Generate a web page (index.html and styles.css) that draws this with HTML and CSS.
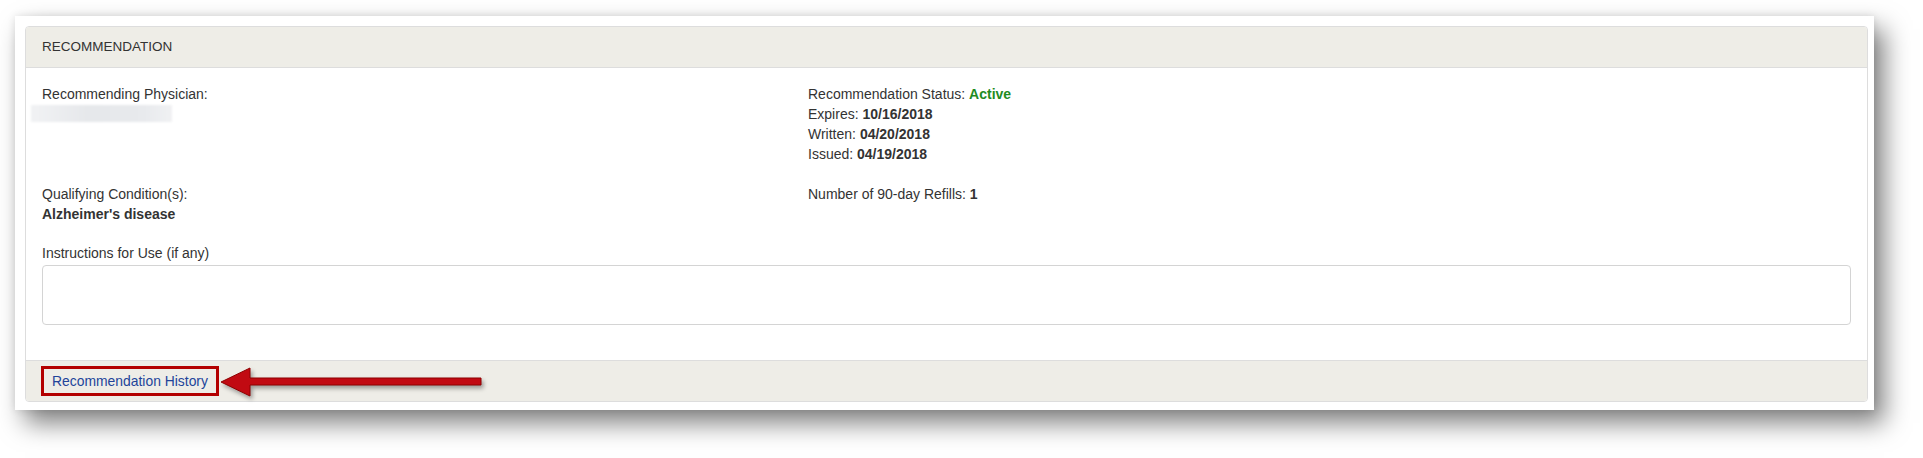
FILE: index.html
```html
<!DOCTYPE html>
<html>
<head>
<meta charset="utf-8">
<link rel="stylesheet" href="styles.css">
</head>
<body>
<div class="frame">
  <div class="panel">
    <div class="panel-heading">RECOMMENDATION</div>
    <div class="panel-body">
      <div class="grid">
        <div class="cell">
          <div>Recommending Physician:</div>
          <div class="redacted"></div>
        </div>
        <div class="cell">
          <div>Recommendation Status: <b class="active">Active</b></div>
          <div>Expires: <b>10/16/2018</b></div>
          <div>Written: <b>04/20/2018</b></div>
          <div>Issued: <b>04/19/2018</b></div>
        </div>
        <div class="cell">
          <div>Qualifying Condition(s):</div>
          <div><b>Alzheimer's disease</b></div>
        </div>
        <div class="cell">
          <div>Number of 90-day Refills: <b>1</b></div>
        </div>
      </div>
      <div class="instructions-label">Instructions for Use (if any)</div>
      <div class="textarea"></div>
    </div>
    <div class="panel-footer">
      <a class="history-link" href="#">Recommendation History</a>
      <svg class="arrow" width="270" height="36" viewBox="0 0 270 36">
        <polygon points="0,16 29,2 29,12 260,12 260,19 29,19 29,30" fill="#c10a12" stroke="#8e0000" stroke-width="1"/>
      </svg>
    </div>
  </div>
</div>
</body>
</html>
```
FILE: styles.css
```css
html, body {
  margin: 0;
  padding: 0;
  background: #ffffff;
}
body {
  font-family: "Liberation Sans", Arial, sans-serif;
  font-size: 14px;
  line-height: 20px;
  color: #333333;
  min-height: 458px;
}
.frame {
  margin: 16px 0 0 15px;
  width: 1843px;
  height: 376px;
  padding: 10px 6px 8px 10px;
  background: #ffffff;
  box-shadow: 10px 13px 24px rgba(0, 0, 0, 0.5), 0 0 8px rgba(0, 0, 0, 0.1);
}
.panel {
  border: 1px solid #dddddd;
  border-radius: 4px;
  background: #ffffff;
}
.panel-heading {
  background: #eeede7;
  border-bottom: 1px solid #dddddd;
  border-radius: 3px 3px 0 0;
  padding: 10px 16px;
  font-size: 13.5px;
  color: #333333;
}
.panel-body {
  padding: 16px;
}
.grid {
  display: grid;
  grid-template-columns: 766px 1fr;
  row-gap: 20px;
}
.redacted {
  margin-left: -11px;
  margin-top: 1px;
  width: 141px;
  height: 17px;
  background: linear-gradient(90deg, #f1f2f4 0%, #e6e8eb 40%, #e8eaed 80%, #f0f1f3 100%);
  filter: blur(1px);
}
.active {
  color: #1f8c1f;
}
b {
  font-weight: bold;
}
.instructions-label {
  margin-top: 19px;
}
.textarea {
  margin-top: 2px;
  margin-bottom: 19px;
  height: 58px;
  border: 1px solid #d4d4d4;
  border-radius: 4px;
  background: #ffffff;
}
.panel-footer {
  position: relative;
  background: #eeede7;
  border-top: 1px solid #dddddd;
  border-radius: 0 0 3px 3px;
  padding: 5px 15px;
  height: 30px;
}
.history-link {
  display: inline-block;
  border: 3px solid #b30000;
  padding: 0 8px;
  height: 24px;
  line-height: 24px;
  font-size: 13.9px;
  color: #22449a;
  text-decoration: none;
}
.arrow {
  position: absolute;
  left: 195px;
  top: 5px;
  filter: drop-shadow(2px 3px 2px rgba(0, 0, 0, 0.35));
}
```
